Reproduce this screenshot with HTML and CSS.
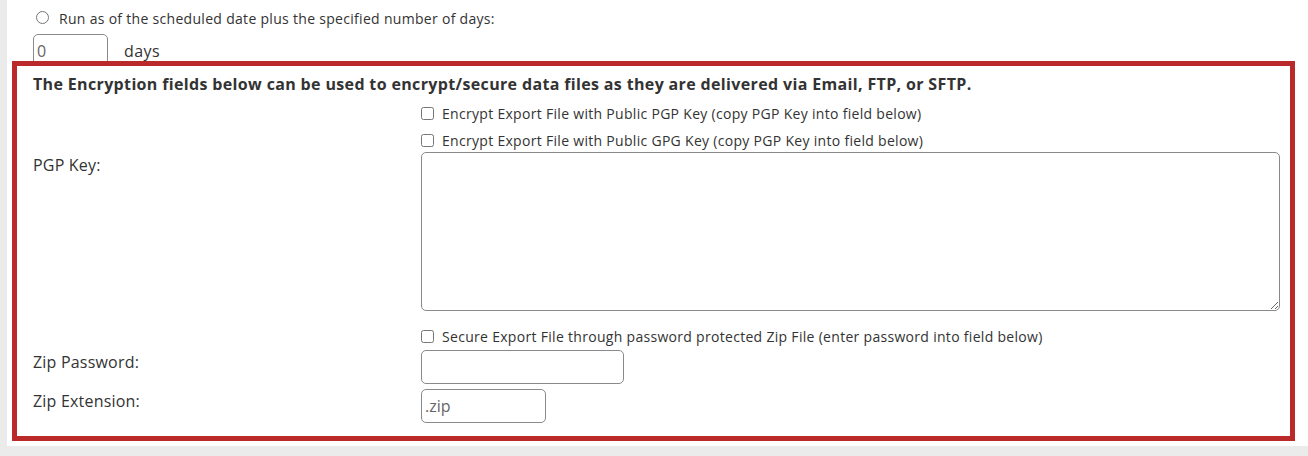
FILE: index.html
```html
<!DOCTYPE html>
<html lang="en">
<head>
    <meta charset="UTF-8">
    <title>Export Schedule - Encryption</title>
    <link rel="stylesheet" href="styles.css">
</head>
<body>
    <div class="panel">
        <div class="run-option">
            <input type="radio" id="run-days" name="run-as">
            <label for="run-days">Run as of the scheduled date plus the specified number of days:</label>
        </div>
        <div class="days-row">
            <input type="text" class="days-input" value="0">
            <span>days</span>
        </div>

        <div class="encryption-box">
            <p class="encryption-note">The Encryption fields below can be used to encrypt/secure data files as they are delivered via Email, FTP, or SFTP.</p>

            <div class="form-row check-row">
                <div class="form-label"></div>
                <div class="form-field">
                    <input type="checkbox" id="pgp">
                    <label for="pgp">Encrypt Export File with Public PGP Key (copy PGP Key into field below)</label>
                </div>
            </div>
            <div class="form-row check-row">
                <div class="form-label"></div>
                <div class="form-field">
                    <input type="checkbox" id="gpg">
                    <label for="gpg">Encrypt Export File with Public GPG Key (copy PGP Key into field below)</label>
                </div>
            </div>
            <div class="form-row key-row">
                <div class="form-label label-top">PGP Key:</div>
                <div class="form-field">
                    <textarea class="pgp-key"></textarea>
                </div>
            </div>
            <div class="form-row check-row zip-check">
                <div class="form-label"></div>
                <div class="form-field">
                    <input type="checkbox" id="zip">
                    <label for="zip">Secure Export File through password protected Zip File (enter password into field below)</label>
                </div>
            </div>
            <div class="form-row input-row">
                <div class="form-label">Zip Password:</div>
                <div class="form-field">
                    <input type="password" class="zip-password">
                </div>
            </div>
            <div class="form-row input-row">
                <div class="form-label">Zip Extension:</div>
                <div class="form-field">
                    <input type="text" class="zip-extension" value=".zip">
                </div>
            </div>
        </div>
    </div>
</body>
</html>
```

FILE: styles.css
```css
:root {
    --page-bg: #ebebeb;
    --text-color: #333;
    --accent-red: #bb2a2a;
    --input-border: #8a8a8a;
}

* {
    margin: 0;
    padding: 0;
    box-sizing: border-box;
}

body {
    font-family: 'Open Sans', 'Noto Sans', sans-serif;
    color: var(--text-color);
    background-color: var(--page-bg);
    width: 1308px;
    height: 456px;
    overflow: hidden;
}

.panel {
    background-color: #fff;
    margin-left: 7px;
    padding-bottom: 5px;
}

.run-option {
    display: flex;
    align-items: center;
    height: 34px;
    padding: 3px 0 0 29px;
    font-size: 14px;
    letter-spacing: 0.3px;
}

.run-option input {
    width: 13px;
    height: 13px;
    margin: -2px 10px 0 0;
}

.days-row {
    display: flex;
    align-items: center;
    padding-left: 26px;
    font-size: 16px;
    letter-spacing: 0.4px;
}

.days-row span {
    margin-left: 16px;
}

.days-input,
.zip-password,
.zip-extension {
    height: 34px;
    border: 1px solid var(--input-border);
    border-radius: 5px;
    padding: 0 3px;
    font-family: inherit;
    font-size: 16px;
    color: #666;
    outline: none;
}

.days-input {
    width: 75px;
}

.encryption-box {
    position: relative;
    margin: -7px 13px 0 5px;
    border: 5px solid var(--accent-red);
    padding: 8px 10px 13px 16px;
    background-color: #fff;
}

.encryption-note {
    font-size: 16px;
    font-weight: bold;
    letter-spacing: 0.35px;
    line-height: 20px;
    margin-bottom: 6px;
}

.form-row {
    display: flex;
}

.form-label {
    width: 388px;
    flex-shrink: 0;
    font-size: 16px;
    letter-spacing: 0.2px;
}

.label-top {
    padding-top: 2px;
}

.check-row {
    height: 27px;
    align-items: center;
    font-size: 14px;
    letter-spacing: 0.3px;
}

.check-row .form-field {
    display: flex;
    align-items: center;
}

.check-row input {
    width: 13px;
    height: 13px;
    margin-right: 8px;
}

.key-row {
    margin-top: -2px;
}

.pgp-key {
    display: block;
    width: 859px;
    height: 159px;
    border: 1px solid var(--input-border);
    border-radius: 5px;
    resize: vertical;
    outline: none;
}

.zip-check {
    margin-top: 12px;
}

.input-row {
    align-items: flex-start;
    margin-bottom: 5px;
}

.input-row .form-label {
    padding-top: 1px;
}

.input-row:last-child {
    margin-bottom: 0;
}

.zip-password {
    width: 203px;
}

.zip-extension {
    width: 125px;
}
```
